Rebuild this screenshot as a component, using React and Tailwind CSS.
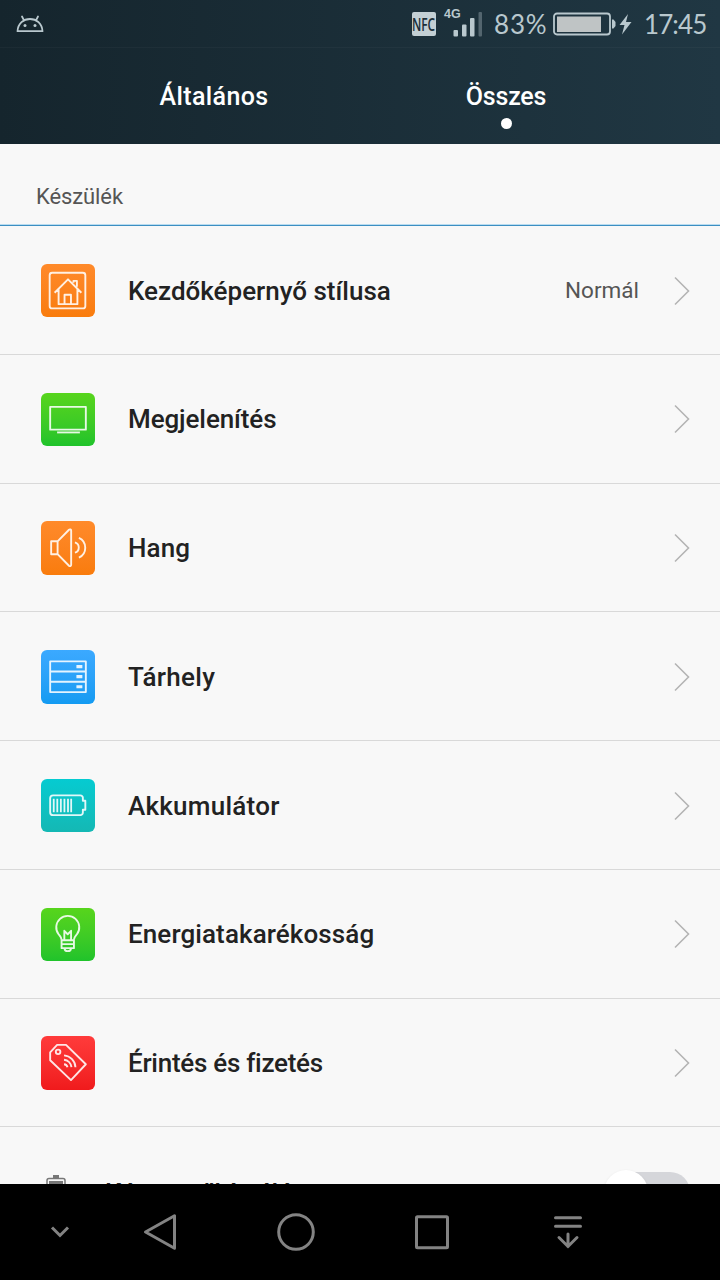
import clsx from 'clsx'

const HomeIcon = () => (
  <>
    <rect x="8.5" y="8.8" width="36" height="36" rx="2.5" />
    <path d="M13.5 29 27 15.5 40.5 29M17.5 25.5v15h19v-15M23.5 40.5V31H30v9.500M32.5 19v-2H36v6" />
  </>
)

const DisplayIcon = () => (
  <>
    <rect x="9" y="14" width="36" height="23" />
    <path d="M16 39.8h23" />
  </>
)

const SoundIcon = () => (
  <>
    <path d="M10 20.5h6.5v13H10zM16.5 20.5 28 8.8a1.3 1.3 0 0 1 2.2 1v34.4a1.3 1.3 0 0 1-2.2 1L16.5 33.5" />
    <path d="M34 21.5a5.5 5.5 0 0 1 0 10.5M38 17a11 11 0 0 1 0 20" />
  </>
)

const StorageIcon = () => (
  <>
    <path d="M9 11.5h36v31H9zM9 21.7h36M9 32h36" />
    <path d="M35.5 16.8h6M35.5 26.9h6M35.5 37.1h6" strokeWidth="3.2" />
  </>
)

const BatteryIcon = () => (
  <>
    <path d="M12 16.5h27.5A2.5 2.5 0 0 1 42 19v3h2.5v9H42v3a2.5 2.5 0 0 1-2.5 2.5H12a3 3 0 0 1-3-3v-14a3 3 0 0 1 3-3z" />
    <path d="M12.6 20v13.5M16.2 20v13.5M19.8 20v13.5M23.4 20v13.5M27 20v13.5M30.2 20v13.5" strokeWidth="1.8" />
  </>
)

const BulbIcon = () => (
  <>
    <path d="M20.5 32c-.5-3-1.5-3.5-3-5.5a11.6 11.6 0 1 1 18.5 0c-1.5 2-2.500 2.500-3 5.500" />
    <path d="M23.3 32v-9l3.4 3.5 3.4-3.5v9M20.5 32.5H33v8H20.5zM20.5 36.5H33M23.5 40.5c0 4 6.5 4 6.5 0" />
  </>
)

const TagIcon = () => (
  <>
    <path d="M16 9h9l20 19.5-15 16-21-20v-8z" />
    <circle cx="17" cy="16" r="2.3" />
    <path d="M23 28.5a4 4 0 0 1 3.5 3M23 24a8.5 8.5 0 0 1 7.5 7.5M23 19.5a12.5 12.5 0 0 1 11.5 12" />
  </>
)

const rows = [
  { label: 'Kezdőképernyő stílusa', value: 'Normál', icon: HomeIcon, bg: 'from-[#ff8a2a] to-[#f97c0c]' },
  { label: 'Megjelenítés', icon: DisplayIcon, bg: 'from-[#57d51c] to-[#1fc32b]', tracking: 'tracking-[-0.1px]' },
  { label: 'Hang', icon: SoundIcon, bg: 'from-[#ff8a2a] to-[#f97c0c]', tracking: 'tracking-[0.1px]' },
  { label: 'Tárhely', icon: StorageIcon, bg: 'from-[#3ba9ff] to-[#139bf2]', tracking: 'tracking-[0.3px]' },
  { label: 'Akkumulátor', icon: BatteryIcon, bg: 'from-[#05cbd1] to-[#14b8b4]', tracking: 'tracking-[0.25px]' },
  { label: 'Energiatakarékosság', icon: BulbIcon, bg: 'from-[#57d51c] to-[#1fc32b]', tracking: 'tracking-[0.1px]' },
  { label: 'Érintés és fizetés', icon: TagIcon, bg: 'from-[#ff3b3b] to-[#f01a1c]', tracking: 'tracking-[-0.27px]' },
]

const StatusBar = () => (
  <div className="flex h-12 items-center border-b border-white/[0.03] pl-4 font-['Lato',sans-serif] text-[26px] leading-none text-[#b9c8ce]">
    <svg className="h-[18px] w-7" viewBox="0 0 28 18" fill="none" stroke="currentColor" strokeWidth="1.8">
      <path d="M1.5 16.2C2 8.5 7.5 4 14 4s12 4.5 12.5 12.2zM8 5.3 6 1.5M20 5.3l2-3.8" strokeLinejoin="round" strokeLinecap="round" />
      <circle cx="9" cy="10.5" r="1.5" fill="currentColor" stroke="none" />
      <circle cx="19" cy="10.5" r="1.5" fill="currentColor" stroke="none" />
    </svg>
    <div className="ml-[368px] flex h-6 w-6 items-center justify-center rounded-[2px] bg-[#c3cfd4]">
      <span className="scale-x-[0.66] font-['Open_Sans',sans-serif] text-[18px] font-semibold text-[#1c2e38]">NFC</span>
    </div>
    <div className="relative ml-2 h-9 w-[38px]">
      <span className="absolute left-0 top-0.5 font-['Liberation_Sans',sans-serif] text-[12.5px] font-bold">4G</span>
      <svg className="absolute bottom-0 left-[9px] h-[30px] w-[30px]" viewBox="0 0 30 30" fill="currentColor">
        <rect x="0.5" y="18" width="4.5" height="6.5" rx="1" />
        <rect x="9" y="12.5" width="4.5" height="12" rx="1" />
        <rect x="17" y="6" width="4.5" height="18.5" rx="1" />
        <rect x="25.5" y="0" width="3.5" height="24.5" rx="1" fillOpacity=".35" />
      </svg>
    </div>
    <span className="ml-3 w-[54px] whitespace-nowrap tracking-[0.8px]">83%</span>
    <svg className="ml-[5px] h-6 w-20" viewBox="0 0 80 24" fill="none">
      <rect x="1" y="1.5" width="56" height="21" rx="3" stroke="currentColor" strokeWidth="1.8" />
      <rect x="4" y="4.5" width="44" height="15.5" fill="#bfc4c5" />
      <path d="M59 7.5h1.5l2 2.5v4l-2 2.5H59z" fill="currentColor" />
      <path d="M75 2 66.5 13h5L69 22.5 78.5 10H73z" fill="currentColor" />
    </svg>
    <span className="ml-[11px] whitespace-nowrap tracking-[-0.9px]">17:45</span>
  </div>
)

const SettingRow = ({ label, value, icon: Icon, bg, tracking }) => (
  <div className="flex h-[128.75px] shrink-0 items-center border-b border-[#d9d9d9] pl-[41px] pr-[30px] pt-[1.5px]">
    <div className={clsx('h-[53.5px] w-[54px] rounded-[6px] bg-linear-to-b', bg)}>
      <svg className="h-full w-full" viewBox="0 0 54 54" fill="none" stroke="#fff" strokeOpacity=".88" strokeWidth="1.9" strokeLinejoin="round">
        <Icon />
      </svg>
    </div>
    <span className={clsx('ml-[33px] flex-1 pt-px text-[26px] font-medium text-[#222]', tracking)}>{label}</span>
    {value && <span className="mr-[35px] pt-px text-[22.5px] text-[#555]">{value}</span>}
    <svg className="h-[30px] w-4" viewBox="0 0 16 30" fill="none" stroke="#b4b4b4" strokeWidth="1.6">
      <path d="M1 1.5 14.5 15 1 28.5" />
    </svg>
  </div>
)

const NavBar = () => (
  <div className="flex h-24 shrink-0 items-center bg-black">
    <svg className="ml-[50px] h-5 w-5" viewBox="0 0 20 20" fill="none" stroke="#838383" strokeWidth="3">
      <path d="M2 5.5 10 13.5l8-8" />
    </svg>
    <svg className="ml-[70px] h-10 w-10" viewBox="0 0 40 40" fill="none" stroke="#838383" strokeWidth="3" strokeLinejoin="round">
      <path d="M34.5 3.8v32.4L5.5 20z" />
    </svg>
    <svg className="ml-24 h-10 w-10" viewBox="0 0 40 40" fill="none" stroke="#838383" strokeWidth="3">
      <circle cx="20" cy="20" r="17.3" />
    </svg>
    <svg className="ml-24 h-10 w-10" viewBox="0 0 40 40" fill="none" stroke="#838383" strokeWidth="3">
      <rect x="4.5" y="4.8" width="31" height="31" rx="1" />
    </svg>
    <svg className="ml-24 h-10 w-10" viewBox="0 0 40 40" fill="none" stroke="#838383" strokeWidth="3" strokeLinecap="round">
      <path d="M7.5 5.7h25M7.5 14.2h25M20 22v12.5M11 25.5l9 9 9-9" />
    </svg>
  </div>
)

export default function App() {
  return (
    <div className="flex h-[1280px] w-[720px] flex-col overflow-hidden bg-[#f8f8f8] font-['Roboto',sans-serif]">
      <header className="h-36 shrink-0 bg-linear-to-r from-[#15252d] to-[#203743]">
        <StatusBar />
        <div className="flex px-[68px] text-[25px] font-medium text-white">
          <div className="flex w-1/2 flex-col items-center pt-[31px] leading-9 tracking-[0.4px]">Általános</div>
          <div className="flex w-1/2 flex-col items-center pt-[31px] leading-9">
            <span className="tracking-[-0.2px]">Összes</span>
            <span className="mt-[3px] h-[11px] w-[11px] rounded-full bg-white" />
          </div>
        </div>
      </header>

      <main className="flex min-h-0 flex-1 flex-col overflow-hidden">
        <div className="flex h-[82px] shrink-0 flex-col justify-end">
          <h2 className="pb-[11px] pl-9 text-[22px] tracking-[-0.1px] text-[#555]">Készülék</h2>
          <div className="h-0.5 bg-linear-to-b from-[#b9dcf0] from-50% to-[#3c8fc2] to-50%" />
        </div>
        {rows.map((row) => (
          <SettingRow key={row.label} {...row} />
        ))}
        <div className="flex h-[129px] shrink-0 items-center pl-[46px] pr-[30px]">
          <svg className="h-9 w-5" viewBox="0 0 20 36" fill="none" stroke="#777" strokeWidth="1.5">
            <path d="M7 2.5h6" strokeWidth="3" />
            <rect x="1" y="4.5" width="18" height="30" rx="2" />
            <rect x="3" y="7" width="14" height="25" fill="#777" stroke="none" />
          </svg>
          <span className="ml-[39px] flex-1 pt-1 text-[26px] font-medium text-[#222]">Képernyőkímélés</span>
          <div className="flex h-10 w-[83px] items-center rounded-full bg-[#d5d6da]">
            <span className="-ml-[3px] h-[44px] w-[44px] shrink-0 rounded-full bg-white shadow-sm" />
          </div>
        </div>
      </main>

      <NavBar />
    </div>
  )
}
